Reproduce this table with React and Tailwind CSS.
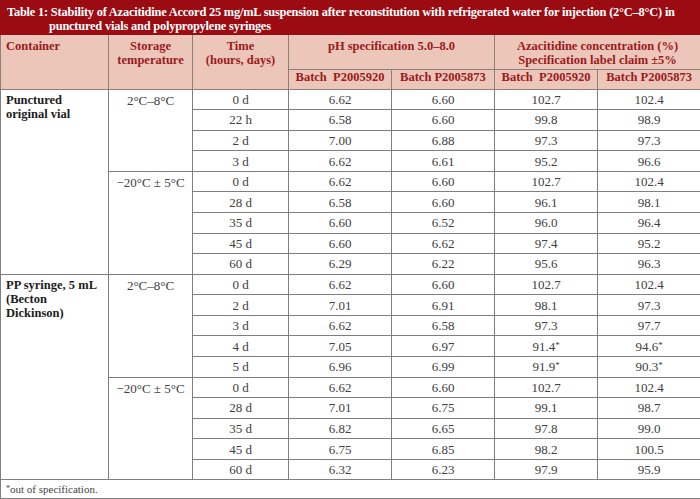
const groups = [
  {
    container: ['Punctured', 'original vial'],
    temps: [
      {
        label: '2°C–8°C',
        rows: [
          ['0 d', '6.62', '6.60', '102.7', '102.4'],
          ['22 h', '6.58', '6.60', '99.8', '98.9'],
          ['2 d', '7.00', '6.88', '97.3', '97.3'],
          ['3 d', '6.62', '6.61', '95.2', '96.6'],
        ],
      },
      {
        label: '−20°C ± 5°C',
        rows: [
          ['0 d', '6.62', '6.60', '102.7', '102.4'],
          ['28 d', '6.58', '6.60', '96.1', '98.1'],
          ['35 d', '6.60', '6.52', '96.0', '96.4'],
          ['45 d', '6.60', '6.62', '97.4', '95.2'],
          ['60 d', '6.29', '6.22', '95.6', '96.3'],
        ],
      },
    ],
  },
  {
    container: ['PP syringe, 5 mL', '(Becton', 'Dickinson)'],
    temps: [
      {
        label: '2°C–8°C',
        rows: [
          ['0 d', '6.62', '6.60', '102.7', '102.4'],
          ['2 d', '7.01', '6.91', '98.1', '97.3'],
          ['3 d', '6.62', '6.58', '97.3', '97.7'],
          ['4 d', '7.05', '6.97', '91.4*', '94.6*'],
          ['5 d', '6.96', '6.99', '91.9*', '90.3*'],
        ],
      },
      {
        label: '−20°C ± 5°C',
        rows: [
          ['0 d', '6.62', '6.60', '102.7', '102.4'],
          ['28 d', '7.01', '6.75', '99.1', '98.7'],
          ['35 d', '6.82', '6.65', '97.8', '99.0'],
          ['45 d', '6.75', '6.85', '98.2', '100.5'],
          ['60 d', '6.32', '6.23', '97.9', '95.9'],
        ],
      },
    ],
  },
]

// value with an out-of-spec star
const Value = ({ v }) => {
  if (v.endsWith('*')) {
    return (
      <span>
        {v.slice(0, -1)}
        <span className="relative -top-[3px] text-[9px]">*</span>
      </span>
    )
  }
  return v
}

const App = () => {
  const cell = 'border border-[#7f7f7f] text-center align-middle p-0 leading-none'
  const head = 'border border-[#8f7f7b] bg-[#ebc6b9] text-[#9c1a1e] font-bold text-[12.5px] leading-[14px] align-top'

  return (
    <div className="w-[700px] h-[499px] bg-white overflow-hidden" style={{ fontFamily: '"Liberation Serif", "DejaVu Serif", serif' }}>
      <div className="h-[35px] bg-[#9b0b12] text-white font-bold text-[12.4px] tracking-[-0.2px] leading-[14px] pt-[5px] whitespace-nowrap">
        <div className="pl-[7px]">
          Table 1: Stability of Azacitidine Accord 25 mg/mL suspension after reconstitution with refrigerated water for injection (2°C–8°C) in
        </div>
        <div className="pl-[49px]">punctured vials and polypropylene syringes</div>
      </div>

      <table className="w-[700px] table-fixed border-collapse text-[13px] text-[#404040]">
        <colgroup>
          <col className="w-[108px]" />
          <col className="w-[84px]" />
          <col className="w-[96px]" />
          <col className="w-[103px]" />
          <col className="w-[103px]" />
          <col className="w-[103px]" />
          <col className="w-[103px]" />
        </colgroup>
        <thead>
          <tr className="h-[34px]">
            <th rowSpan={2} className={`${head} text-left pl-[5px] pt-[4px] border-t-0`}>Container</th>
            <th rowSpan={2} className={`${head} text-center pt-[4px] border-t-0`}>
              Storage
              <br />
              temperature
            </th>
            <th rowSpan={2} className={`${head} text-center pt-[4px] border-t-0`}>
              Time
              <br />
              (hours, days)
            </th>
            <th colSpan={2} className={`${head} text-center pt-[4px] border-t-0`}>pH specification 5.0–8.0</th>
            <th colSpan={2} className={`${head} text-center pt-[4px] border-t-0`}>
              Azacitidine concentration (%)
              <br />
              Specification label claim ±5%
            </th>
          </tr>
          <tr className="h-[20px]">
            <th className={`${head} text-center align-middle`}>Batch&nbsp; P2005920</th>
            <th className={`${head} text-center align-middle`}>Batch P2005873</th>
            <th className={`${head} text-center align-middle`}>Batch&nbsp; P2005920</th>
            <th className={`${head} text-center align-middle`}>Batch P2005873</th>
          </tr>
        </thead>
        <tbody>
          {groups.map((g, gi) => {
            const total = g.temps.reduce((n, t) => n + t.rows.length, 0)
            return g.temps.map((t, ti) =>
              t.rows.map((r, ri) => (
                <tr key={`${gi}-${ti}-${ri}`} className="h-[20.58px]">
                  {ti === 0 && ri === 0 && (
                    <td rowSpan={total} className="border border-[#7f7f7f] align-top text-left pl-[5px] pt-[3px] font-bold text-[12.5px] text-[#1c1c1c] leading-[14px]">
                      {g.container.map((line, i) => (
                        <div key={i}>{line}</div>
                      ))}
                    </td>
                  )}
                  {ri === 0 && (
                    <td rowSpan={t.rows.length} className="border border-[#7f7f7f] align-top text-center pt-[4px] leading-[14px]">
                      {t.label}
                    </td>
                  )}
                  {r.map((v, vi) => (
                    <td key={vi} className={cell}>
                      <Value v={v} />
                    </td>
                  ))}
                </tr>
              ))
            )
          })}
          <tr className="h-[19px]">
            <td colSpan={7} className="border border-[#7f7f7f] text-left pl-[5px] text-[11px] leading-none text-[#444]">
              <span className="relative -top-[2px] text-[8px]">*</span>out of specification.
            </td>
          </tr>
        </tbody>
      </table>
    </div>
  )
}

export default App
